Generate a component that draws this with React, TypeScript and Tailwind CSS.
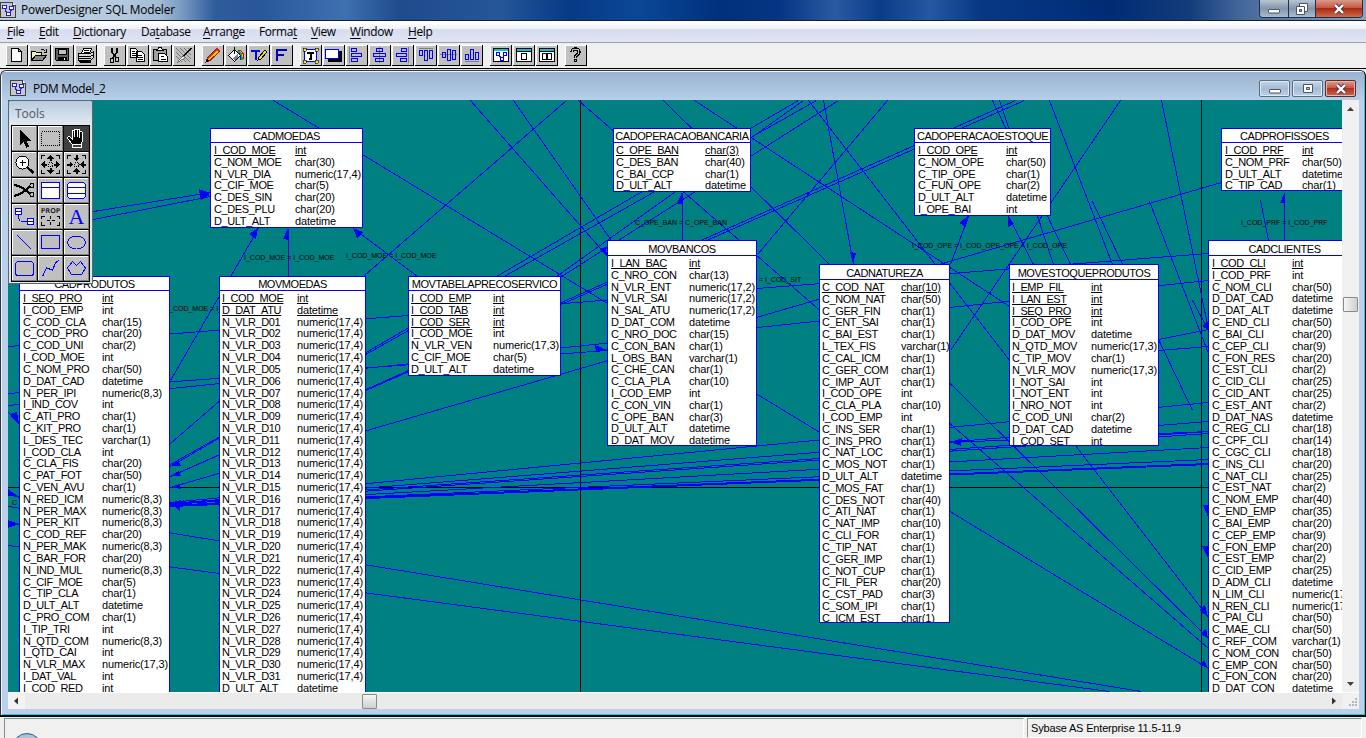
import React from "react";

type Column = [name: string, type: string, key?: boolean];

interface Entity {
  title: string;
  box: string;
  header: string;
  nameCol: string;
  columns: Column[];
}

const parse = (source: string, keys = 1): Column[] =>
  source
    .trim()
    .split(/\s+/)
    .map((pair, i) => {
      const [name, type] = pair.split(":");
      return [name, type, i < keys];
    });

const dailyValues = Array.from({ length: 31 }, (_, i) => `N_VLR_D${String(i + 1).padStart(2, "0")}:numeric(17,4)`).join(" ");

const entities: Entity[] = [
  {
    title: "CADMOEDAS",
    box: "left-[202px] top-[28px] w-[153px] h-[100px]",
    header: "h-[14px]",
    nameCol: "w-[81px] ml-[3px]",
    columns: parse(
      "I_COD_MOE:int C_NOM_MOE:char(30) N_VLR_DIA:numeric(17,4) C_CIF_MOE:char(5) C_DES_SIN:char(20) C_DES_PLU:char(20) D_ULT_ALT:datetime",
    ),
  },
  {
    title: "CADPRODUTOS",
    box: "left-[11px] top-[176px] w-[151px] h-[500px]",
    header: "h-[14px]",
    nameCol: "w-[79px] ml-[3px]",
    columns: parse(
      "I_SEQ_PRO:int I_COD_EMP:int C_COD_CLA:char(15) C_COD_PRO:char(20) C_COD_UNI:char(2) I_COD_MOE:int C_NOM_PRO:char(50) D_DAT_CAD:datetime N_PER_IPI:numeric(8,3) I_IND_COV:int C_ATI_PRO:char(1) C_KIT_PRO:char(1) L_DES_TEC:varchar(1) I_COD_CLA:int C_CLA_FIS:char(20) C_PAT_FOT:char(50) C_VEN_AVU:char(1) N_RED_ICM:numeric(8,3) N_PER_MAX:numeric(8,3) N_PER_KIT:numeric(8,3) C_COD_REF:char(20) N_PER_MAK:numeric(8,3) C_BAR_FOR:char(20) N_IND_MUL:numeric(8,3) C_CIF_MOE:char(5) C_TIP_CLA:char(1) D_ULT_ALT:datetime C_PRO_COM:char(1) I_TIP_TRI:int N_QTD_COM:numeric(8,3) I_QTD_CAI:int N_VLR_MAX:numeric(17,3) I_DAT_VAL:int I_COD_RED:int",
    ),
  },
  {
    title: "MOVMOEDAS",
    box: "left-[211px] top-[176px] w-[147px] h-[500px]",
    header: "h-[14px]",
    nameCol: "w-[75px] ml-[2px]",
    columns: parse(`I_COD_MOE:int D_DAT_ATU:datetime ${dailyValues} D_ULT_ALT:datetime`, 2),
  },
  {
    title: "MOVTABELAPRECOSERVICO",
    box: "left-[400px] top-[176px] w-[153px] h-[100px]",
    header: "h-[14px]",
    nameCol: "w-[82px] ml-[2px]",
    columns: parse(
      "I_COD_EMP:int I_COD_TAB:int I_COD_SER:int I_COD_MOE:int N_VLR_VEN:numeric(17,3) C_CIF_MOE:char(5) D_ULT_ALT:datetime",
      3,
    ),
  },
  {
    title: "CADOPERACAOBANCARIA",
    box: "left-[605px] top-[28px] w-[138px] h-[64px]",
    header: "h-[14px]",
    nameCol: "w-[89px] ml-[2px]",
    columns: parse("C_OPE_BAN:char(3) C_DES_BAN:char(40) C_BAI_CCP:char(1) D_ULT_ALT:datetime"),
  },
  {
    title: "MOVBANCOS",
    box: "left-[599px] top-[140px] w-[150px] h-[206px]",
    header: "h-[15px]",
    nameCol: "w-[78px] ml-[3px]",
    columns: parse(
      "I_LAN_BAC:int C_NRO_CON:char(13) N_VLR_ENT:numeric(17,2) N_VLR_SAI:numeric(17,2) N_SAL_ATU:numeric(17,2) D_DAT_COM:datetime C_NRO_DOC:char(15) C_CON_BAN:char(1) L_OBS_BAN:varchar(1) C_CHE_CAN:char(1) C_CLA_PLA:char(10) I_COD_EMP:int C_CON_VIN:char(1) C_OPE_BAN:char(3) D_ULT_ALT:datetime D_DAT_MOV:datetime",
    ),
  },
  {
    title: "CADNATUREZA",
    box: "left-[811px] top-[164px] w-[131px] h-[359px]",
    header: "h-[15px]",
    nameCol: "w-[79px] ml-[2px]",
    columns: parse(
      "C_COD_NAT:char(10) C_NOM_NAT:char(50) C_GER_FIN:char(1) C_ENT_SAI:char(1) C_BAI_EST:char(1) L_TEX_FIS:varchar(1) C_CAL_ICM:char(1) C_GER_COM:char(1) C_IMP_AUT:char(1) I_COD_OPE:int C_CLA_PLA:char(10) I_COD_EMP:int C_INS_SER:char(1) C_INS_PRO:char(1) C_NAT_LOC:char(1) C_MOS_NOT:char(1) D_ULT_ALT:datetime C_MOS_FAT:char(1) C_DES_NOT:char(40) C_ATI_NAT:char(1) C_NAT_IMP:char(10) C_CLI_FOR:char(1) C_TIP_NAT:char(1) C_GER_IMP:char(1) C_NOT_CUP:char(1) C_FIL_PER:char(20) C_CST_PAD:char(3) C_SOM_IPI:char(1) C_ICM_EST:char(1)",
    ),
  },
  {
    title: "CADOPERACAOESTOQUE",
    box: "left-[906px] top-[28px] w-[137px] h-[88px]",
    header: "h-[14px]",
    nameCol: "w-[88px] ml-[3px]",
    columns: parse("I_COD_OPE:int C_NOM_OPE:char(50) C_TIP_OPE:char(1) C_FUN_OPE:char(2) D_ULT_ALT:datetime I_OPE_BAI:int"),
  },
  {
    title: "MOVESTOQUEPRODUTOS",
    box: "left-[1001px] top-[164px] w-[150px] h-[182px]",
    header: "h-[15px]",
    nameCol: "w-[79px] ml-[2px]",
    columns: parse(
      "I_EMP_FIL:int I_LAN_EST:int I_SEQ_PRO:int I_COD_OPE:int D_DAT_MOV:datetime N_QTD_MOV:numeric(17,3) C_TIP_MOV:char(1) N_VLR_MOV:numeric(17,3) I_NOT_SAI:int I_NOT_ENT:int I_NRO_NOT:int C_COD_UNI:char(2) D_DAT_CAD:datetime I_COD_SET:int",
      3,
    ),
  },
  {
    title: "CADPROFISSOES",
    box: "left-[1213px] top-[28px] w-[127px] h-[63px]",
    header: "h-[14px]",
    nameCol: "w-[77px] ml-[3px]",
    columns: parse("I_COD_PRF:int C_NOM_PRF:char(50) D_ULT_ALT:datetime C_TIP_CAD:char(1)"),
  },
  {
    title: "CADCLIENTES",
    box: "left-[1200px] top-[140px] w-[153px] h-[500px]",
    header: "h-[15px]",
    nameCol: "w-[80px] ml-[3px]",
    columns: parse(
      "I_COD_CLI:int I_COD_PRF:int C_NOM_CLI:char(50) D_DAT_CAD:datetime D_DAT_ALT:datetime C_END_CLI:char(50) C_BAI_CLI:char(20) C_CEP_CLI:char(9) C_FON_RES:char(20) C_EST_CLI:char(2) C_CID_CLI:char(25) C_CID_ANT:char(25) C_EST_ANT:char(2) D_DAT_NAS:datetime C_REG_CLI:char(18) C_CPF_CLI:char(14) C_CGC_CLI:char(18) C_INS_CLI:char(20) C_NAT_CLI:char(25) C_EST_NAT:char(2) C_NOM_EMP:char(40) C_END_EMP:char(35) C_BAI_EMP:char(20) C_CEP_EMP:char(9) C_FON_EMP:char(20) C_EST_EMP:char(2) C_CID_EMP:char(25) D_ADM_CLI:datetime N_LIM_CLI:numeric(17,2) N_REN_CLI:numeric(17,2) C_PAI_CLI:char(50) C_MAE_CLI:char(50) C_REF_COM:varchar(1) C_NOM_CON:char(50) C_EMP_CON:char(50) C_FON_CON:char(20) D_DAT_CON:datetime",
    ),
  },
];

const links: [number, number, number, number][] = [
  [93, 211, 210, 192], [93, 219, 210, 196],
  [170, 380, 258, 228], [288, 228, 288, 276], [353, 228, 417, 276],
  [273, 100, 1208, 668], [470, 100, 607, 256], [513, 100, 613, 243],
  [566, 100, 170, 443], [578, 100, 1208, 648], [663, 100, 1208, 638],
  [694, 100, 1009, 306],
  [798, 100, 170, 466], [816, 100, 170, 464], [803, 100, 556, 276], [838, 100, 558, 278],
  [170, 476, 1015, 100], [170, 476, 1024, 100], [170, 487, 1221, 182],
  [8, 346, 1208, 253], [8, 405, 1208, 280], [8, 393, 607, 350],
  [8, 412, 19, 424], [8, 491, 19, 497], [8, 523, 19, 524],
  [8, 506, 1141, 691], [8, 545, 1109, 691],
  [170, 502, 1208, 402], [170, 503, 1208, 421], [170, 503, 1208, 431], [170, 504, 1208, 433],
  [170, 505, 1208, 447], [170, 505, 1208, 459], [170, 505, 1208, 463], [170, 506, 1208, 464],
  [950, 442, 1208, 431], [823, 100, 853, 264], [887, 100, 757, 254],
  [808, 100, 1208, 617], [999, 100, 1053, 264], [992, 100, 1070, 264],
  [1049, 100, 1112, 264], [1092, 201, 1192, 410], [1120, 100, 950, 350],
  [1161, 100, 1208, 329], [1149, 201, 1208, 353], [1192, 300, 1208, 330],
  [1158, 339, 1208, 329], [1158, 350, 1208, 346],
  [1284, 192, 1284, 240], [1260, 200, 1268, 240], [682, 192, 682, 240],
  [968, 216, 950, 264], [1008, 216, 1033, 264],
];

const arrowHeads = [
  "210,193 199,189 200,197", "210,195 199,191 201,200",
  "258,228 249,234 256,239", "288,228 283,239 288,240", "353,228 363,232 357,238",
  "607,257 599,249 606,247", "607,350 595,345 596,352", "682,192 677,204 682,204",
  "170,466 178,460 181,466", "170,476 179,471 181,476", "170,487 179,484 181,489", "170,503 181,500 180,511", "170,505 184,500 184,506",
  "853,264 850,252 856,253", "968,216 959,223 966,227", "1008,216 1008,227 1014,224",
  "950,442 962,438 961,446", "1285,192 1280,203 1285,203",
  "1208,330 1202,326 1207,322", "1208,517 1203,505 1208,505", "1208,558 1202,546 1208,546",
  "1208,617 1199,610 1205,605", "1208,638 1200,634 1206,629", "1208,668 1199,665 1204,660",
  "19,424 10,414 17,412", "19,497 8,489 8,496", "19,524 8,520 8,528",
];

const labels = [
  { text: "I_COD_MOE = I_COD_MOE", at: "left-[236px] top-[152px]" },
  { text: "I_COD_MOE = I_COD_MOE", at: "left-[338px] top-[150px]" },
  { text: "_COD_MOE = I_", at: "left-[161px] top-[203px]" },
  { text: "C_OPE_BAN = C_OPE_BAN", at: "left-[627px] top-[117px]" },
  { text: "= I_COD_SIT", at: "left-[751px] top-[174px]" },
  { text: "I_COD_OPE = I_COD_OPE_OPE = I_COD_OPE", at: "left-[904px] top-[140px]" },
  { text: "I_COD_PRF = I_COD_PRF", at: "left-[1233px] top-[117px]" },
  { text: "_C", at: "left-0 top-[397px]" },
];

function EntityBox({ entity }: { entity: Entity }) {
  return (
    <div className={`absolute flex flex-col border border-[#0000ff] bg-white text-black ${entity.box}`}>
      <div className={`flex shrink-0 items-center justify-center border-b border-[#0000ff] pt-px ${entity.header}`}>
        <span className="whitespace-nowrap text-[11px] leading-[12px] tracking-[-0.45px]">{entity.title}</span>
      </div>
      <div className="flex flex-col overflow-hidden pt-[2px]">
        {entity.columns.map(([name, type, key]) => (
          <div key={name} className="flex h-[11.82px] shrink-0 items-center whitespace-nowrap text-[11px] leading-[11.82px]">
            <span className={`shrink-0 tracking-[-0.38px] ${entity.nameCol}`}>
              <span className={key ? "underline underline-offset-1" : ""}>{name}</span>
            </span>
            <span className={key ? "tracking-[-0.15px] underline underline-offset-1" : "tracking-[-0.15px]"}>{type}</span>
          </div>
        ))}
      </div>
    </div>
  );
}

function Diagram() {
  return (
    <div className="relative h-[592px] min-w-0 flex-1 overflow-hidden bg-[#008080]">
      <svg className="absolute inset-0 h-[592px] w-[1334px]" viewBox="8 100 1334 592" shapeRendering="crispEdges">
        <path d="M580.5 100V692M1201.5 100V692M8 487.5H1342" stroke="#000" fill="none" />
        <g stroke="#0000ff" strokeWidth="1">
          {links.map(([x1, y1, x2, y2], i) => (
            <line key={i} x1={x1 + 0.5} y1={y1 + 0.5} x2={x2 + 0.5} y2={y2 + 0.5} />
          ))}
        </g>
        <g fill="#0000ff">
          {arrowHeads.map((points) => (
            <polygon key={points} points={points} />
          ))}
        </g>
      </svg>
      {labels.map((label) => (
        <span key={label.at} className={`absolute whitespace-nowrap text-[7px] leading-[11px] text-black ${label.at}`}>
          {label.text}
        </span>
      ))}
      {entities.map((entity) => (
        <EntityBox key={entity.title} entity={entity} />
      ))}
      <ToolPalette />
    </div>
  );
}

const B = "#0000ff";

const paletteIcons: React.ReactNode[] = [
  <path d="M8 4v15l3.500-3.500 3 6.500 2.500-1.500-3-6h4.500z" fill="#000" />,
  <path d="M3.500 5.500h18v14h-18z" fill="none" stroke="#000" strokeDasharray="1 1" />,
  <g>
    <path d="M8 18l-4-5c-1-2 1-3 2-2l2 2V6c0-2 2.500-2 2.500 0V4.500c0-2 2.500-2 2.500 0v.5c0-2 2.500-2 2.500 0v2c0-2 3-1.500 3 0v8l-1.500 3z" fill="#000" stroke="#fff" />
    <path d="M10.500 5v6M13 5v6M15.500 6v6M8 18.500v2.500h9v-2.500z" stroke="#fff" fill="none" />
  </g>,
  <g fill="none" stroke="#000">
    <circle cx="10.500" cy="10.500" r="6.500" fill="#fff" />
    <path d="M7.500 10.500h6M10.500 7.500v6" />
    <path d="M15 15l6.500 6" strokeWidth="2.500" />
  </g>,
  <g fill="none" stroke="#000">
    <path d="M3.500 7V3.500H7M18 3.500h3.500V7M21.500 18v3.500H18M7 21.500H3.500V18" />
    <path d="M10.500 10.500h4v4h-4z" strokeDasharray="1 1" />
    <path d="M12.500 3l-3.500 4h7zM12.500 22l-3.500-4h7zM3 12.500l4-3.500v7zM22 12.500l-4-3.500v7z" fill="#000" stroke="none" />
    <path d="M12.500 6v3M12.500 16v3M6 12.500h3M16 12.500h3" strokeWidth="2" />
  </g>,
  <g fill="none" stroke="#000">
    <path d="M3.500 7V3.500H7M18 3.500h3.500V7M21.500 18v3.500H18M7 21.500H3.500V18" />
    <path d="M10.500 10.500h4v4h-4z" strokeDasharray="1 1" />
    <path d="M12.500 9.500l-3.500-4h7zM12.500 15.500l-3.500 4h7zM9.500 12.500l-4-3.500v7zM15.500 12.500l4-3.500v7z" fill="#000" stroke="none" />
    <path d="M12.500 3v3M12.500 19v3M3 12.500h3M19 12.500h3" strokeWidth="2" />
  </g>,
  <g fill="none" stroke="#000">
    <path d="M2 6.500l7 2.500 9 6.500M2 18l7-2.500 9-7" strokeWidth="2.200" />
    <circle cx="20" cy="7.500" r="2" />
    <circle cx="20" cy="16.500" r="2" />
  </g>,
  <path d="M3.500 4.500h18v16h-18zM3.500 9.500h18" fill="#fff" stroke={B} />,
  <path d="M5.500 4.500h14l2 2v12l-2 2h-14l-2-2v-12zM3.500 9.500h18M3.500 15.500h18" fill="#fff" stroke={B} />,
  <g stroke={B} fill="#fff">
    <path d="M3.500 4.500h6v6h-6zM3.500 7.500h6M15.500 14.500h6v6h-6zM15.500 17.500h6" />
    <path d="M6.500 11v4M7.500 15v2M9 17.500h6" fill="none" />
  </g>,
  <g>
    <text x="3" y="9" fontSize="6.500" textLength="19" fontFamily="DejaVu Sans" shapeRendering="auto" stroke="#000" strokeWidth=".2">PROP</text>
    <path d="M3.500 15v-2.500h3M18.500 12.500h3v2.500M21.500 18v3.500h-3M6.500 21.500h-3V18M12.500 12v3M12.500 18v3M8.500 16.500h3M14 16.500h3" stroke="#000" fill="none" />
  </g>,
  <text x="12.500" y="19.500" fontSize="22" textAnchor="middle" fill={B} fontFamily="Liberation Serif">A</text>,
  <path d="M5 5l14 14" stroke={B} fill="none" />,
  <path d="M3.500 5.500h18v13h-18z" stroke={B} fill="none" />,
  <ellipse cx="12.500" cy="12.500" rx="9" ry="6.500" stroke={B} fill="none" />,
  <rect x="3.500" y="5.500" width="18" height="14" rx="3" stroke={B} fill="none" />,
  <path d="M4.500 20.500l4-8.500 6 2 3-7 3.500-3" stroke={B} fill="none" />,
  <path d="M3.500 12l5-6.500 4 4 4-4 5 6.500-4 6.500h-10z" stroke={B} fill="none" />,
];

function ToolPalette() {
  return (
    <div className="absolute left-0 top-0 flex h-[184px] w-[85px] flex-col rounded-t-[3px] border border-[#5e6770] bg-[#dfe6ee] px-[2px]">
      <div className="-mx-[2px] flex h-6 shrink-0 items-center rounded-t-[3px] bg-linear-to-b from-[#b9cbde] to-[#e2eaf2] pl-[6px] pt-[2px] text-[12px] text-[#4f5862]">
        <span className="font-['Open_Sans',sans-serif]">Tools</span>
      </div>
      <div className="grid w-[79px] grid-cols-3 gap-px bg-black p-px">
        {paletteIcons.map((icon, i) => (
          <div
            key={i}
            className={
              i === 2
                ? "h-[25px] w-[25px] bg-[#404040]"
                : "h-[25px] w-[25px] border-b border-r border-b-[#808080] border-r-[#808080] bg-[#c0c0c0] shadow-[inset_1px_1px_0_#fff]"
            }
          >
            <svg className="h-[25px] w-[25px]" viewBox="0 0 25 25" shapeRendering="crispEdges">
              {icon}
            </svg>
          </div>
        ))}
      </div>
    </div>
  );
}

const toolbarGroups: React.ReactNode[][] = [
  [
    <path d="M5.500 3.500h7l3 3v10h-10zM12.500 3.500v3h3" fill="#fff" stroke="#000" />,
    <g stroke="#000">
      <path d="M2.500 15.500v-9h4l1 1h5v3" fill="#f0f0c0" />
      <path d="M2.500 15.500l4-5h11l-4 5z" fill="#858585" />
      <path d="M11.500 4.500h3l2 2M17.500 4v3h-3" fill="none" />
    </g>,
    <g stroke="#000">
      <path d="M3.500 3.500h13v12h-12l-1-1z" fill="#606060" />
      <path d="M6 4h8v5H6z" fill="#c0c0c0" />
      <path d="M6 12h8v3.500H6z" fill="#000" />
      <path d="M12 13h1v2h-1z" fill="#fff" stroke="none" />
    </g>,
    <g stroke="#000">
      <path d="M6.500 8.500l2-5h8l-2 5z" fill="#fff" />
      <path d="M3.500 8.500h12l3-2v6l-3 3h-12z" fill="#d8d8d8" />
      <path d="M3.500 11.500h12l3-2M3.500 13.500h12M9 5.500h5M8.500 7h5" fill="none" />
      <path d="M4 15.500h11v1.500H5z" fill="#000" />
    </g>,
  ],
  [
    <g stroke="#000" fill="none">
      <path d="M8 3v4l4 6M13 3v4l-4 6" strokeWidth="1.500" />
      <path d="M6.500 13h3v4h-3zM11.500 12.500h3v4h-3z" />
    </g>,
    <g stroke="#000" fill="#fff">
      <path d="M3.500 3.500h5l2 2v7h-7zM9.500 6.500h5l3 3v7h-8z" />
      <path d="M5 6h3M5 8h4M5 10h4M11 10h4M11 12h5M11 14h5" />
    </g>,
    <g stroke="#000">
      <path d="M3.500 4.500h13v11h-13z" fill="#a0a0a0" />
      <path d="M7 5.500l2-3h2l2 3z" fill="#fff" />
      <path d="M8.500 8.500h6l3 3v5h-9z" fill="#fff" />
      <path d="M10.500 11.500h3M10.500 14.500h5" />
    </g>,
    <g>
      <path d="M3 3l14 14M7 3l11 11M3 7l10 10M11 3l7 7M3 11l6 6M15 3l3 3" stroke="#777" />
      <path d="M18 3l-8 9" stroke="#000" strokeWidth="1.500" />
      <path d="M10 11l2 2-4 2-4 3 3-4z" stroke="#444" strokeWidth=".6" fill="#fff" />
    </g>,
  ],
  [
    <g>
      <path d="M4 17l1.500-4L15 3l3 3-10 9.500z" fill="#ffcc00" stroke="#8b1a10" />
      <path d="M6 14l9.500-10" stroke="#e03020" strokeWidth="1.500" />
      <path d="M4 17l1-3 2 2z" fill="#000" />
      <path d="M14.500 3.500l3 3" stroke="#e02020" strokeWidth="2" />
    </g>,
    <g>
      <path d="M3.500 10.500l6-6 6 6-6 6z" fill="#fff" stroke="#000" />
      <path d="M9.500 2v7" stroke="#000" />
      <path d="M12 6.500c4 0 5 3 5 8" stroke="#00c000" fill="none" strokeWidth="1.500" />
      <path d="M13 5c5 0 6 4 6 9" stroke="#e00000" fill="none" />
      <path d="M13 8c2.500 1 3 4 3 7" stroke="#0000ff" fill="none" />
      <path d="M8 13l5-4v3l-3 4z" fill="#808080" />
    </g>,
    <g>
      <path d="M3 6h9M7.500 6v9" stroke={B} strokeWidth="2" />
      <path d="M10 15l1-3 6-7 2 2-6 7z" fill="#ffe000" stroke="#000" />
    </g>,
    <path d="M6 16V5h10M6 10h7" fill="none" stroke="#0000c8" strokeWidth="2.400" />,
  ],
  [
    <g>
      <path d="M4.500 4.500h12v12h-12z" fill="#fff" stroke={B} />
      <path d="M3 3h3v3H3zM15 3h3v3h-3zM3 15h3v3H3zM15 15h3v3h-3z" fill="#f5e642" stroke="#000" strokeWidth=".6" />
      <path d="M7 8h7M10.500 7v7M9 14h3" stroke="#000" strokeWidth="2" />
    </g>,
    <g>
      <path d="M5 6h14v11H5z" fill="#000" />
      <path d="M2.500 4.500h13v9h-13z" fill="#fff" stroke={B} />
    </g>,
    <g fill="none" stroke={B}>
      <path d="M3.500 2v16" stroke="#808080" />
      <path d="M5.500 3.500h5v3h-5zM5.500 8.500h10v3h-10zM5.500 13.500h6v3h-6z" />
    </g>,
    <g fill="none" stroke={B}>
      <path d="M10.500 2v16" stroke="#808080" />
      <path d="M7.500 3.500h6v3h-6zM4.500 8.500h12v3h-12zM6.500 13.500h8v3h-8z" />
    </g>,
    <g fill="none" stroke={B}>
      <path d="M16.500 2v16" stroke="#808080" />
      <path d="M9.500 3.500h5v3h-5zM4.500 8.500h10v3h-10zM8.500 13.500h6v3h-6z" />
    </g>,
    <g fill="none" stroke={B}>
      <path d="M4 3.500h14" stroke="#808080" />
      <path d="M4.500 5.500h3v5h-3zM9.500 5.500h3v10h-3zM14.500 5.500h3v8h-3z" />
    </g>,
    <g fill="none" stroke={B}>
      <path d="M2 9.500h17" stroke="#808080" />
      <path d="M4.500 7.500h3v5h-3zM9.500 4.500h3v11h-3zM14.500 5.500h3v9h-3z" />
    </g>,
    <g fill="none" stroke={B}>
      <path d="M4 16.500h14" stroke="#808080" />
      <path d="M4.500 9.500h3v5h-3zM9.500 4.500h3v10h-3zM14.500 7.500h3v7h-3z" />
    </g>,
  ],
  [
    <g>
      <path d="M3.500 3.500h15v13h-15z" fill="#fff" stroke="#000" />
      <path d="M4 4h14v2H4z" fill="#00c8d8" />
      <path d="M6.500 7.500h3v3h-3zM13.500 7.500h3v3h-3zM10.500 12.500h3v3h-3zM9 11l2 1M14 11l-1 1" fill="none" stroke={B} />
    </g>,
    <g>
      <path d="M3.500 3.500h15v13h-15z" fill="#fff" stroke="#000" />
      <path d="M4 4h14v2H4z" fill="#00c8d8" />
      <path d="M3.500 6.500h15M8.500 8.500h5v6h-5z" fill="none" stroke="#000" />
    </g>,
    <g>
      <path d="M3.500 3.500h15v13h-15z" fill="#fff" stroke="#000" />
      <path d="M4 4h14v2H4z" fill="#00c8d8" />
      <path d="M3.500 6.500h15M6.500 8.500h4v6h-4zM11.500 8.500h4v6h-4z" fill="none" stroke="#000" />
    </g>,
  ],
  [
    <g fill="none">
      <path d="M7 7c0-4 7-4 7 0 0 3-3.500 2.500-3.500 6M10.500 14v3" stroke="#000" strokeWidth="3.400" />
      <path d="M7 7c0-4 7-4 7 0 0 3-3.500 2.500-3.500 6M10.500 15v1" stroke="#c0c0c0" strokeWidth="1" />
    </g>,
  ],
];

function Toolbar() {
  return (
    <div className="flex h-[25px] shrink-0 items-start gap-[7px] bg-[#f0f0f0] pl-[6px] pt-[2px]">
      {toolbarGroups.map((group, g) => (
        <div key={g} className="flex gap-px">
          {group.map((icon, i) => (
            <div
              key={i}
              className="h-[21px] w-[22px] border-b border-r border-b-black border-r-black bg-[#c0c0c0] shadow-[inset_1px_1px_0_#fff]"
            >
              <svg className="h-5 w-[21px]" viewBox="0 0 21 20" shapeRendering="crispEdges">
                {icon}
              </svg>
            </div>
          ))}
        </div>
      ))}
    </div>
  );
}

function AppIcon() {
  return (
    <svg className="h-4 w-4 shrink-0" viewBox="0 0 16 16" shapeRendering="crispEdges">
      <path d="M.5.500h12l3 3v12H.500z" fill="#c8c8c8" stroke="#404040" />
      <path d="M12.500.500v3h3" fill="#fff" stroke="#404040" />
      <path d="M2.500 3.500h4v3h-4zM9.500 4.500h4v3h-4zM6.500 10.500h4v3h-4zM5 7v2l2 1.500M11.500 8l-1.500 2" fill="#fff" stroke="#2020d0" />
    </svg>
  );
}

const menus = [
  ["", "F", "ile", "w-8"],
  ["", "E", "dit", "w-[34px]"],
  ["", "D", "ictionary", "w-[68px]"],
  ["Da", "t", "abase", "w-[62px]"],
  ["", "A", "rrange", "w-[56px]"],
  ["Forma", "t", "", "w-[52px]"],
  ["", "V", "iew", "w-[39px]"],
  ["", "W", "indow", "w-[58px]"],
  ["", "H", "elp", "w-10"],
];

function Glyph({ kind }: { kind: "min" | "restore" | "max" | "close" }) {
  return (
    <svg className="h-3 w-[14px]" viewBox="0 0 14 12">
      {kind === "min" && <rect x="1.500" y="6.500" width="11" height="3.500" rx=".5" fill="#fff" stroke="#4b5568" />}
      {kind === "restore" && (
        <g fill="#fff" stroke="#4b5568">
          <path d="M4.500.500h8v8h-8z" />
          <path d="M1.500 3.500h8v8h-8z" />
          <path d="M4.500 6.500h2v2h-2z" fill="#7890b0" />
        </g>
      )}
      {kind === "max" && (
        <g fill="#fff" stroke="#4b5568">
          <path d="M2.500 1.500h9v8h-9z" />
          <path d="M5.500 4.500h3v2h-3z" fill="#b0c4dc" />
        </g>
      )}
      {kind === "close" && (
        <g fill="none">
          <path d="M3 2l8 8M11 2l-8 8" stroke="#4b3a48" strokeWidth="4" />
          <path d="M3 2l8 8M11 2l-8 8" stroke="#fff" strokeWidth="2.300" />
        </g>
      )}
    </svg>
  );
}

function TitleBar() {
  return (
    <div className="flex h-[21px] shrink-0 justify-between border-b border-[#10203c] bg-[linear-gradient(90deg,#bccde0_0px,#b6c9de_120px,#a3bad5_160px,#7d9dc4_180px,#2f5c9c_215px,#28569a_260px,#3f70b0_345px,#1f4b8d_400px,#255698_500px,#073a86_570px,#0b4796_640px,#00307c_720px,#063583_780px,#2a5ba0_835px,#0b3c88_880px,#2558a0_930px,#083885_980px,#002c74_1110px,#123c7a_1190px,#44679a_1240px,#8aa3bf_1366px)]">
      <div className="flex items-center gap-[5px]">
        <AppIcon />
        <span className="whitespace-nowrap text-[11.9px] tracking-[-0.2px] text-black">PowerDesigner SQL Modeler</span>
      </div>
      <div className="mr-[3px] flex h-[18px] overflow-hidden rounded-b-[4px] border border-t-0 border-[#20304a]">
        <div className="flex w-[29px] items-center justify-center border-r border-[#20304a] bg-linear-to-b from-[#b9c4d1] via-[#8496ab] to-[#a9bacd]">
          <Glyph kind="min" />
        </div>
        <div className="flex w-[27px] items-center justify-center border-r border-[#20304a] bg-linear-to-b from-[#b9c4d1] via-[#8496ab] to-[#a9bacd]">
          <Glyph kind="restore" />
        </div>
        <div className="flex w-[46px] items-center justify-center bg-[linear-gradient(180deg,#d99a8c_0%,#c65842_45%,#a92a12_50%,#cf6a4c_100%)]">
          <Glyph kind="close" />
        </div>
      </div>
    </div>
  );
}

function MenuBar() {
  return (
    <div className="flex h-[22px] shrink-0 items-center border-b border-t border-b-[#a0a0a0] border-t-white bg-[linear-gradient(180deg,#ffffff_0%,#eef1f8_35%,#d7ddee_38%,#dfe5f4_100%)] pb-[2px] pl-[7px]">
      {menus.map(([before, key, after, width]) => (
        <span key={before + key + after} className={`shrink-0 whitespace-nowrap text-[11.9px] leading-4 tracking-[-0.35px] text-black ${width}`}>
          {before}
          <span className="underline underline-offset-2">{key}</span>
          {after}
        </span>
      ))}
    </div>
  );
}

function ChildWindow() {
  return (
    <div className="flex h-[645px] shrink-0 flex-col overflow-hidden rounded-t-[6px] border border-b-0 border-[#303840] border-r-[#000] bg-[#b9d1ea] shadow-[inset_1px_1px_0_#eef5fc,inset_-1px_-1px_0_#27c8dc]">
      <div className="mx-px mt-px flex h-[28px] shrink-0 items-center justify-between bg-linear-to-b from-[#9ab3d0] to-[#b7cfe8] pl-2 pr-2">
        <div className="flex items-center gap-[7px] pt-[4px]">
          <AppIcon />
          <span className="font-['Open_Sans',sans-serif] text-[11.9px] leading-4 tracking-[-0.35px] text-black">PDM Model_2</span>
        </div>
        <div className="flex gap-[2px] pt-[5px]">
          <div className="flex h-[17px] w-[31px] items-center justify-center rounded-[2px] border border-[#5a6b80] bg-[linear-gradient(180deg,#c4d5e8_0%,#a5bcd5_50%,#b9d0e8_100%)] shadow-[inset_0_0_0_1px_#dce9f6]">
            <Glyph kind="min" />
          </div>
          <div className="flex h-[17px] w-[31px] items-center justify-center rounded-[2px] border border-[#5a6b80] bg-[linear-gradient(180deg,#c4d5e8_0%,#a5bcd5_50%,#b9d0e8_100%)] shadow-[inset_0_0_0_1px_#dce9f6]">
            <Glyph kind="max" />
          </div>
          <div className="flex h-[17px] w-[31px] items-center justify-center rounded-[2px] border border-[#5a2a28] bg-[linear-gradient(180deg,#dd9a8e_0%,#c65a48_45%,#b03020_50%,#cf6450_100%)] shadow-[inset_0_0_0_1px_#e8b8ac]">
            <Glyph kind="close" />
          </div>
        </div>
      </div>
      <div className="ml-[7px] mr-[6px] flex h-[592px] shrink-0">
        <Diagram />
        <div className="flex w-[17px] shrink-0 flex-col items-center bg-[#f0f0f0]">
          <svg className="h-[18px] w-[17px]" viewBox="0 0 17 18">
            <path d="M5 11l3.500-4 3.500 4z" fill="#404040" />
          </svg>
          <div className="mt-[179px] h-[15px] w-[15px] rounded-[1px] border border-[#8a8a8a] bg-linear-to-r from-[#f6f6f6] to-[#cfcfcf]" />
          <svg className="mt-auto h-[18px] w-[17px]" viewBox="0 0 17 18">
            <path d="M5 8l3.500 4 3.500-4z" fill="#404040" />
          </svg>
        </div>
      </div>
      <div className="ml-[7px] mr-[6px] flex h-[17px] shrink-0 items-center border-t border-white bg-[#ebebeb]">
        <svg className="h-4 w-[17px] bg-[#f2f2f2]" viewBox="0 0 17 16">
          <path d="M10 4.500v7l-4-3.500z" fill="#303030" />
        </svg>
        <div className="ml-[337px] h-[15px] w-[15px] rounded-[1px] border border-[#8a8a8a] bg-linear-to-b from-[#f6f6f6] to-[#cfcfcf]" />
        <svg className="ml-auto h-4 w-[17px]" viewBox="0 0 17 16">
          <path d="M7 4.500v7l4-3.500z" fill="#303030" />
        </svg>
        <svg className="h-4 w-[17px] bg-[#f0f0f0]" viewBox="0 0 17 16" shapeRendering="crispEdges">
          <path d="M13 5h2v2h-2zM10 8h2v2h-2zM13 8h2v2h-2zM7 11h2v2H7zM10 11h2v2h-2zM13 11h2v2h-2z" fill="#b8b8b8" />
        </svg>
      </div>
    </div>
  );
}

function StatusBar() {
  return (
    <div className="flex h-[21px] shrink-0 gap-[3px] overflow-hidden bg-[#f0f0f0] pl-1 pr-1 pt-px">
      <div className="relative w-[1020px] overflow-hidden border border-b-0 border-[#8c8c8c] border-r-white">
        <div className="absolute left-[7px] top-[14px] h-[30px] w-[30px] rounded-full border border-[#1f5f86] bg-[#a9c4dc]" />
      </div>
      <div className="flex flex-1 items-center border border-[#8c8c8c] border-b-white border-r-white pl-[3px] text-[11px] text-black">
        <span className="whitespace-nowrap tracking-[-0.17px]">Sybase AS Enterprise 11.5-11.9</span>
      </div>
    </div>
  );
}

export default function App() {
  return (
    <div className="flex h-[738px] w-[1366px] flex-col overflow-hidden bg-[#f0f0f0] font-['Liberation_Sans',Arial,sans-serif]">
      <div className="flex shrink-0 flex-col font-['Open_Sans',sans-serif]">
        <TitleBar />
        <MenuBar />
      </div>
      <Toolbar />
      <div className="flex h-[649px] shrink-0 flex-col border-b-2 border-t border-black bg-[#e8e8e8] pt-px">
        <ChildWindow />
      </div>
      <StatusBar />
    </div>
  );
}
